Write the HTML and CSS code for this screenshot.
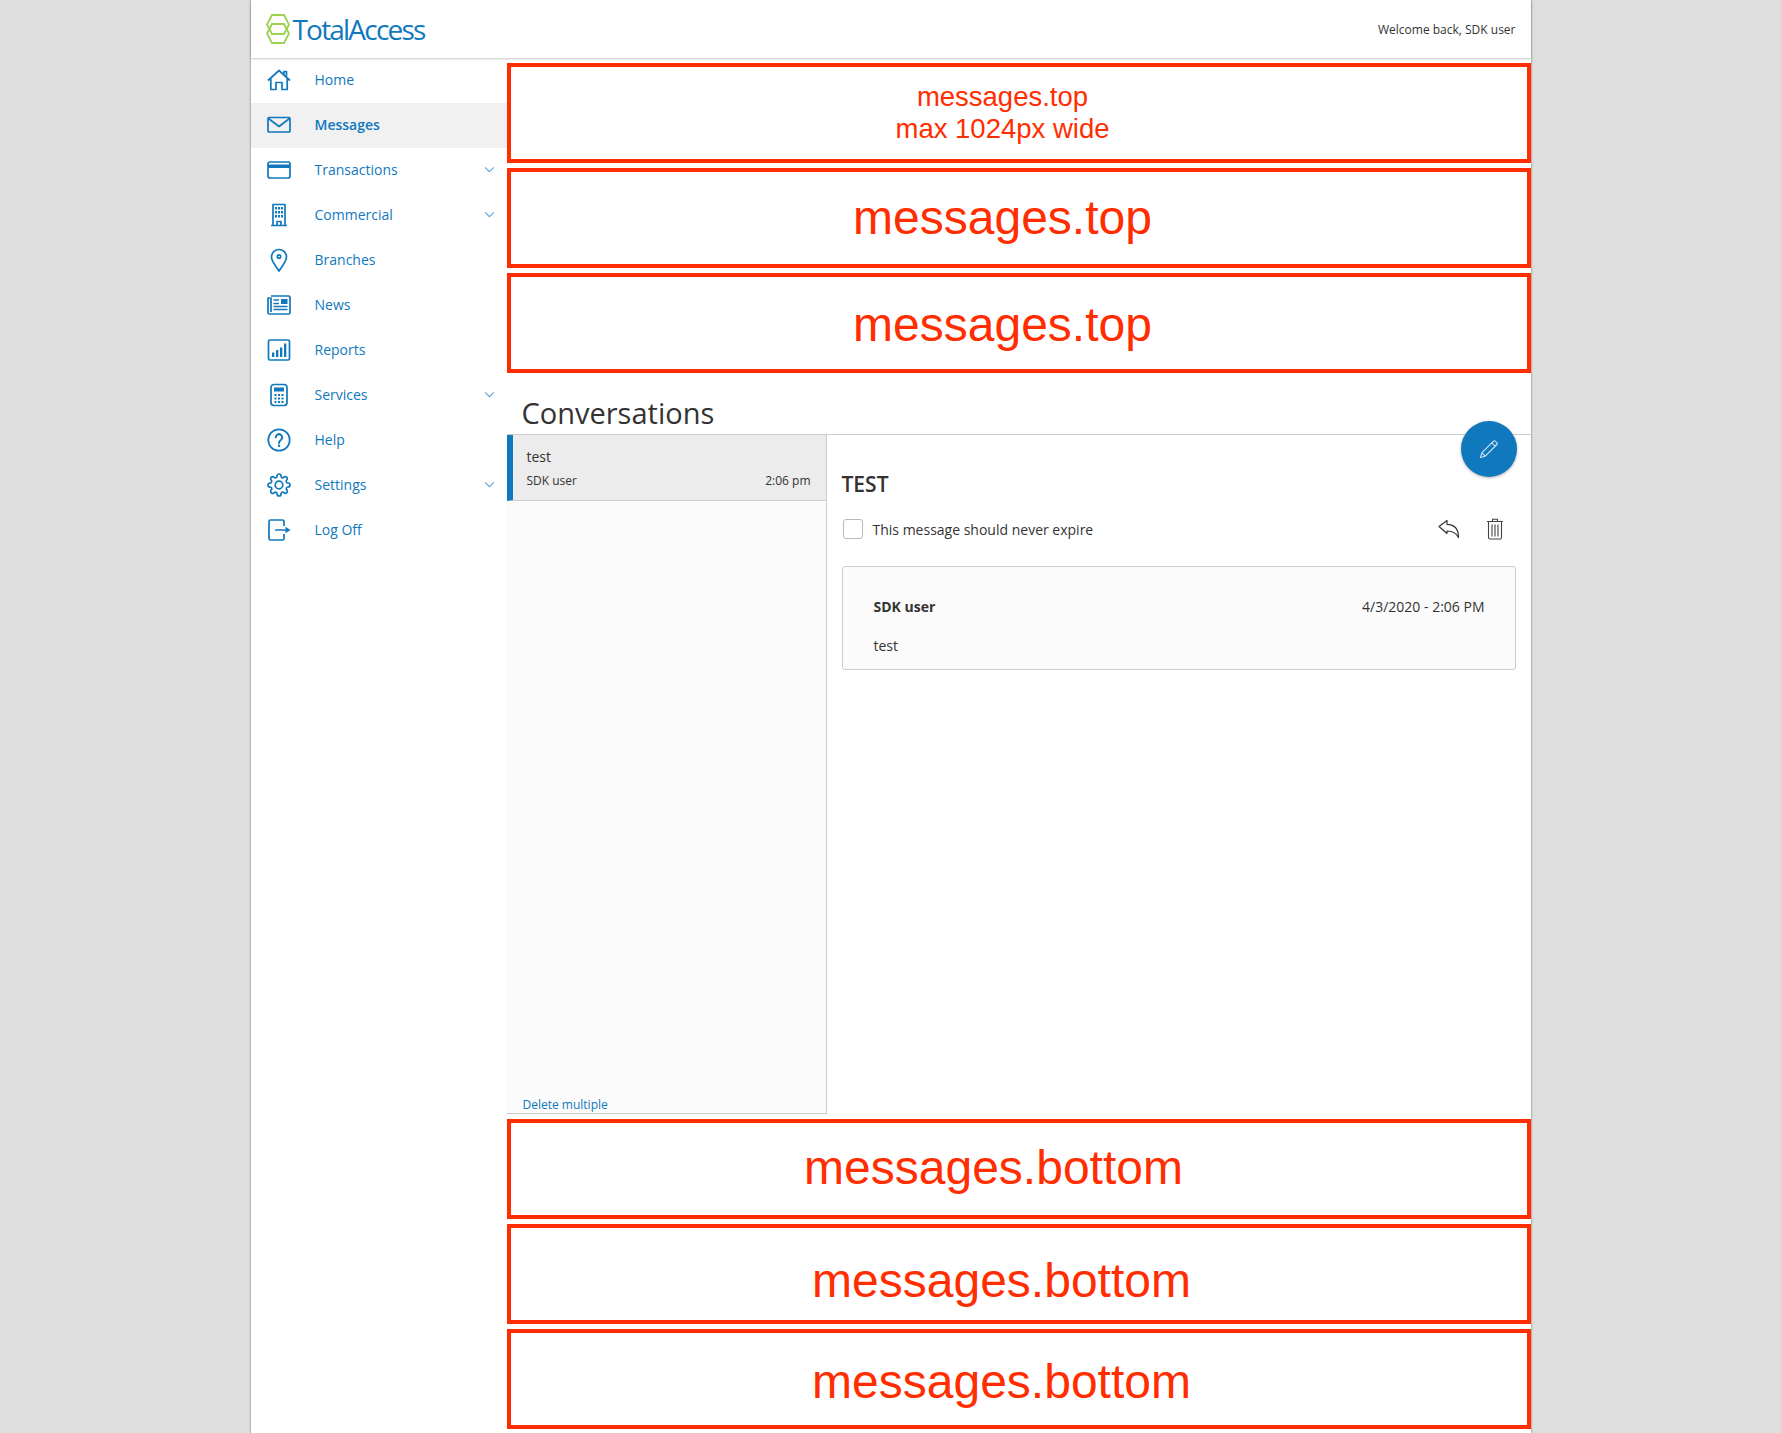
FILE: index.html
```html
<!DOCTYPE html>
<html lang="en">
<head>
<meta charset="utf-8">
<title>TotalAccess - Messages</title>
<link rel="stylesheet" href="styles.css">
</head>
<body>
<div class="page">
  <header class="topbar">
    <div class="logo">
      <svg class="logo-mark" viewBox="0 0 24 30" aria-hidden="true">
        <path d="M6 1H18L23 10.500 18 20H6L1 10.500Z"/>
        <path d="M6 10H18L23 19.500 18 29H6L1 19.500Z"/>
      </svg>
      <span class="logo-text">TotalAccess</span>
    </div>
    <div class="welcome">Welcome back, SDK user</div>
  </header>
  <div class="layout">
    <nav class="sidebar">
      <a class="nav-item">
        <svg class="nav-icon" viewBox="0 0 24 24"><path d="M1 12.500 12 2.500l11 10M3.800 10.500V21.500H9V14.500H15V21.500H20.200V10.500M17 6V3.500H19.500V8.200"/></svg>
        <span class="nav-label">Home</span>
      </a>
      <a class="nav-item active">
        <svg class="nav-icon" viewBox="0 0 24 24"><rect x="1" y="4.500" width="22" height="14.500" rx="1"/><path d="M1.500 5.500 12 13.500 22.500 5.500"/></svg>
        <span class="nav-label">Messages</span>
      </a>
      <a class="nav-item">
        <svg class="nav-icon" viewBox="0 0 24 24"><rect x="1" y="4" width="22" height="16" rx="2"/><rect class="solid" x="1" y="6.500" width="22" height="3.500"/></svg>
        <span class="nav-label">Transactions</span>
        <svg class="chev" viewBox="0 0 12 8"><path d="M1 1.500 6 6.500 11 1.500"/></svg>
      </a>
      <a class="nav-item">
        <svg class="nav-icon" viewBox="0 0 24 24"><path d="M6 22.500V1.500H18V22.500M4 22.500H20M10 22.500V18.500H14V22.500"/><path class="solid" d="M8 4h2v2.500H8zM11 4h2v2.500h-2zM14 4h2v2.500h-2zM8 8h2v2.500H8zM11 8h2v2.500h-2zM14 8h2v2.500h-2zM8 12h2v2.500H8zM11 12h2v2.500h-2zM14 12h2v2.500h-2z"/></svg>
        <span class="nav-label">Commercial</span>
        <svg class="chev" viewBox="0 0 12 8"><path d="M1 1.500 6 6.500 11 1.500"/></svg>
      </a>
      <a class="nav-item">
        <svg class="nav-icon" viewBox="0 0 24 24"><path d="M12 23C8.500 17.500 4.500 13.500 4.500 9a7.500 7.500 0 0 1 15 0C19.500 13.500 15.500 17.500 12 23Z"/><circle cx="12" cy="8.500" r="1.700"/></svg>
        <span class="nav-label">Branches</span>
      </a>
      <a class="nav-item">
        <svg class="nav-icon" viewBox="0 0 24 24"><path d="M4 3H21.500A1.500 1.500 0 0 1 23 4.500V19.500A1.500 1.500 0 0 1 21.500 21H2.500A1.500 1.500 0 0 1 1 19.500V5H4V19M6.500 10.500H12M6.500 13.500H20.500M6.500 16.500H20.500M6.500 7H12"/><rect class="solid" x="14" y="6" width="6.500" height="5"/></svg>
        <span class="nav-label">News</span>
      </a>
      <a class="nav-item">
        <svg class="nav-icon" viewBox="0 0 24 24"><rect x="1.500" y="2" width="21" height="20" rx="1.500"/><path class="solid" d="M5 14.500h2.300V19H5zM9 12h2.300v7H9zM13 9.500h2.300V19H13zM17 5.500h2.300V19H17z"/></svg>
        <span class="nav-label">Reports</span>
      </a>
      <a class="nav-item">
        <svg class="nav-icon" viewBox="0 0 24 24"><rect x="4" y="1.500" width="16" height="21" rx="3"/><path class="solid" d="M7 4.500h10v4H7zM7.500 11h2v2h-2zM11 11h2v2h-2zM14.500 11h2v2h-2zM7.500 14.500h2v2h-2zM11 14.500h2v2h-2zM14.500 14.500h2v2h-2zM7.500 18h2v2h-2zM11 18h2v2h-2zM14.500 18h2v2h-2z"/></svg>
        <span class="nav-label">Services</span>
        <svg class="chev" viewBox="0 0 12 8"><path d="M1 1.500 6 6.500 11 1.500"/></svg>
      </a>
      <a class="nav-item">
        <svg class="nav-icon" viewBox="0 0 24 24"><circle cx="12" cy="12" r="10.700"/><path class="thick" d="M8.800 9.200A3.200 3.200 0 1 1 13.800 12C12.500 12.800 12 13.300 12 15"/><circle class="solid" cx="12" cy="17.800" r="1.200"/></svg>
        <span class="nav-label">Help</span>
      </a>
      <a class="nav-item">
        <svg class="nav-icon" viewBox="0 0 24 24"><circle cx="12" cy="12" r="3.800"/><path d="M19.400 15a1.650 1.650 0 0 0 .33 1.820l.06.06a2 2 0 0 1 0 2.830 2 2 0 0 1-2.830 0l-.06-.06a1.650 1.650 0 0 0-1.820-.33 1.650 1.650 0 0 0-1 1.510V21a2 2 0 0 1-2 2 2 2 0 0 1-2-2v-.09A1.650 1.650 0 0 0 9 19.400a1.650 1.650 0 0 0-1.820.33l-.06.06a2 2 0 0 1-2.830 0 2 2 0 0 1 0-2.830l.06-.06a1.650 1.650 0 0 0 .33-1.820 1.650 1.650 0 0 0-1.510-1H3a2 2 0 0 1-2-2 2 2 0 0 1 2-2h.09A1.650 1.650 0 0 0 4.600 9a1.650 1.650 0 0 0-.33-1.820l-.06-.06a2 2 0 0 1 0-2.830 2 2 0 0 1 2.830 0l.06.06a1.650 1.650 0 0 0 1.820.33H9a1.650 1.650 0 0 0 1-1.510V3a2 2 0 0 1 2-2 2 2 0 0 1 2 2v.09a1.650 1.650 0 0 0 1 1.510 1.650 1.650 0 0 0 1.820-.33l.06-.06a2 2 0 0 1 2.830 0 2 2 0 0 1 0 2.830l-.06.06a1.650 1.650 0 0 0-.33 1.820V9a1.650 1.650 0 0 0 1.510 1H21a2 2 0 0 1 2 2 2 2 0 0 1-2 2h-.09a1.650 1.650 0 0 0-1.510 1z"/></svg>
        <span class="nav-label">Settings</span>
        <svg class="chev" viewBox="0 0 12 8"><path d="M1 1.500 6 6.500 11 1.500"/></svg>
      </a>
      <a class="nav-item">
        <svg class="nav-icon" viewBox="0 0 24 24"><path d="M17 8V3.500A1.500 1.500 0 0 0 15.500 2H3.500A1.500 1.500 0 0 0 2 3.500V20.500A1.500 1.500 0 0 0 3.500 22H15.500A1.500 1.500 0 0 0 17 20.500V16M8 12H19"/><path class="solid" d="M18.500 8.800 23.500 12 18.500 15.200Z"/></svg>
        <span class="nav-label">Log Off</span>
      </a>
    </nav>
    <main class="content">
      <div class="banner top-a small">messages.top<br>max 1024px wide</div>
      <div class="banner top-a">messages.top</div>
      <div class="banner top-b">messages.top</div>
      <section class="conversations">
        <h1 class="conv-title">Conversations</h1>
        <div class="conv-body">
          <aside class="conv-list">
            <div class="conv-item">
              <div class="conv-subject">test</div>
              <div class="conv-meta"><span>SDK user</span><span>2:06 pm</span></div>
            </div>
            <a class="delete-multiple">Delete multiple</a>
          </aside>
          <article class="conv-detail">
            <h2 class="detail-title">TEST</h2>
            <div class="detail-actions">
              <label class="expire"><span class="checkbox"></span>This message should never expire</label>
              <div class="action-icons">
                <svg class="action-reply" viewBox="0 0 22 20"><path d="M1 7.500 9 1.500V5.300C16 5.500 20.500 9.500 20.500 18.500 18.500 14.500 15 12 9 12V14.500Z"/></svg>
                <svg class="action-trash" viewBox="0 0 18 22"><path d="M1 3.500H17M6.500 3.500V1.200H11.500V3.500M2.500 3.500V19.500A1.500 1.500 0 0 0 4 21H14A1.500 1.500 0 0 0 15.500 19.500V3.500M6 6.500V18.500M9 6.500V18.500M12 6.500V18.500"/></svg>
              </div>
            </div>
            <div class="message-card">
              <div class="message-head"><strong>SDK user</strong><span>4/3/2020 - 2:06 PM</span></div>
              <div class="message-text">test</div>
            </div>
          </article>
        </div>
        <button class="fab" aria-label="Compose">
          <svg viewBox="0 0 20 20"><path d="M1.500 18.500 2.800 13.800 14.500 2.100A1.200 1.200 0 0 1 16.200 2.100L17.900 3.800A1.200 1.200 0 0 1 17.900 5.500L6.200 17.200ZM2.800 13.800 6.200 17.200M12.800 3.800 16.200 7.200"/></svg>
        </button>
      </section>
      <div class="banner bottom-a">messages.bottom</div>
      <div class="banner bottom-b">messages.bottom</div>
      <div class="banner bottom-c">messages.bottom</div>
    </main>
  </div>
</div>
</body>
</html>
```
FILE: styles.css
```css
* { box-sizing: border-box; }
html, body { margin: 0; padding: 0; }
body {
  background: #dedede;
  font-family: "Open Sans", "Liberation Sans", sans-serif;
  color: #333;
}
.page {
  width: 1280px;
  min-height: 1433px;
  margin: 0 auto;
  background: #fff;
  box-shadow: 0 0 2px rgba(0, 0, 0, .55);
}
.topbar {
  height: 58px;
  display: flex;
  align-items: center;
  justify-content: space-between;
  padding: 0 15px;
  box-shadow: 0 1px 2px rgba(0, 0, 0, .22);
}
.logo { display: flex; align-items: center; gap: 3px; }
.logo-mark { width: 24px; height: 30px; fill: none; stroke: #9bd34d; stroke-width: 1.800; }
.logo-text { font-size: 28px; line-height: 30px; color: #1078bd; letter-spacing: -1.800px; }
.welcome { font-size: 12px; }
.layout { display: grid; grid-template-columns: 256px 1024px; }
.nav-item {
  height: 45px;
  display: flex;
  align-items: center;
  padding: 0 12px 2px 16px;
  gap: 24px;
  font-size: 14px;
  color: #1078bd;
}
.nav-item.active { background: #f1f1f1; font-weight: 600; }
.nav-icon {
  width: 24px;
  height: 24px;
  flex: none;
  fill: none;
  stroke: #1078bd;
  stroke-width: 1.700;
  stroke-linejoin: round;
}
.nav-icon .solid { fill: #1078bd; stroke: none; }
.nav-icon .thick { stroke-width: 2; stroke-linecap: round; }
.nav-label { flex: 1; }
.chev { width: 11px; height: 7px; flex: none; fill: none; stroke: #5ba5d8; stroke-width: 1.200; }
.content { padding-top: 5px; }
.banner {
  height: 100px;
  margin-bottom: 5px;
  border: 4px solid #ff2d00;
  display: flex;
  align-items: center;
  justify-content: center;
  text-align: center;
  font-family: "Liberation Sans", Arial, sans-serif;
  font-size: 48px;
  line-height: 1;
  color: #ff2d00;
}
.banner.small { font-size: 27.500px; line-height: 32px; }
.banner.top-a { padding-right: 32px; }
.banner.top-b { padding: 4px 32px 0 0; }
.banner.bottom-a { padding: 0 50px 2px 0; }
.banner.bottom-b { padding: 13px 34px 0 0; }
.banner.bottom-c { padding: 5px 34px 0 0; }
.conversations { position: relative; height: 741px; display: flex; flex-direction: column; }
.conv-title {
  margin: 0;
  height: 56px;
  padding: 15px 0 0 15px;
  font-size: 29px;
  line-height: 40px;
  font-weight: 400;
  color: #333;
  flex: none;
}
.conv-body { display: flex; height: 679px; border-top: 1px solid #ccc; }
.conv-list {
  width: 320px;
  height: 679px;
  background: #fbfbfb;
  border-right: 1px solid #ccc;
  border-bottom: 1px solid #ccc;
  display: flex;
  flex-direction: column;
  justify-content: space-between;
}
.conv-item {
  height: 66px;
  background: #ececec;
  border-left: 6px solid #1078bd;
  border-bottom: 1px solid #ccc;
  padding: 12px 15px 0 14px;
}
.conv-subject { font-size: 14px; line-height: 20px; }
.conv-meta {
  display: flex;
  justify-content: space-between;
  margin-top: 4px;
  font-size: 12px;
  line-height: 20px;
}
.delete-multiple { font-size: 12px; line-height: 16px; color: #1078bd; padding: 0 0 0 16px; }
.conv-detail { flex: 1; padding: 36px 15px 0; }
.detail-title { margin: 0; font-size: 21px; line-height: 26px; font-weight: 600; }
.detail-actions {
  display: flex;
  align-items: center;
  justify-content: space-between;
  height: 30px;
  margin-top: 17px;
}
.expire { display: flex; align-items: center; gap: 10px; font-size: 14px; padding-left: 1px; }
.checkbox {
  width: 20px;
  height: 20px;
  background: #fff;
  border: 1.500px solid #b9b9b9;
  border-radius: 3px;
}
.action-icons { display: flex; align-items: center; gap: 26px; padding-right: 12px; }
.action-reply { width: 22px; height: 20px; fill: none; stroke: #333; stroke-width: 1.200; stroke-linejoin: round; }
.action-trash { width: 18px; height: 22px; fill: none; stroke: #444; stroke-width: 1.100; }
.message-card {
  height: 104px;
  margin-top: 22px;
  background: #fbfbfb;
  border: 1px solid #ccc;
  border-radius: 3px;
  padding: 30px 30px 0 31px;
  font-size: 14px;
}
.message-head { display: flex; justify-content: space-between; line-height: 20px; }
.message-head strong { font-weight: 700; }
.message-text { margin-top: 19px; line-height: 20px; }
.fab {
  position: absolute;
  right: 14px;
  top: 43px;
  width: 56px;
  height: 56px;
  padding: 0;
  border: 0;
  border-radius: 50%;
  background: #1078bd;
  box-shadow: 0 1px 3px rgba(0, 0, 0, .3);
  display: flex;
  align-items: center;
  justify-content: center;
}
.fab svg { width: 20px; height: 20px; fill: none; stroke: #cfe4f3; stroke-width: 1.100; stroke-linejoin: round; }
```
